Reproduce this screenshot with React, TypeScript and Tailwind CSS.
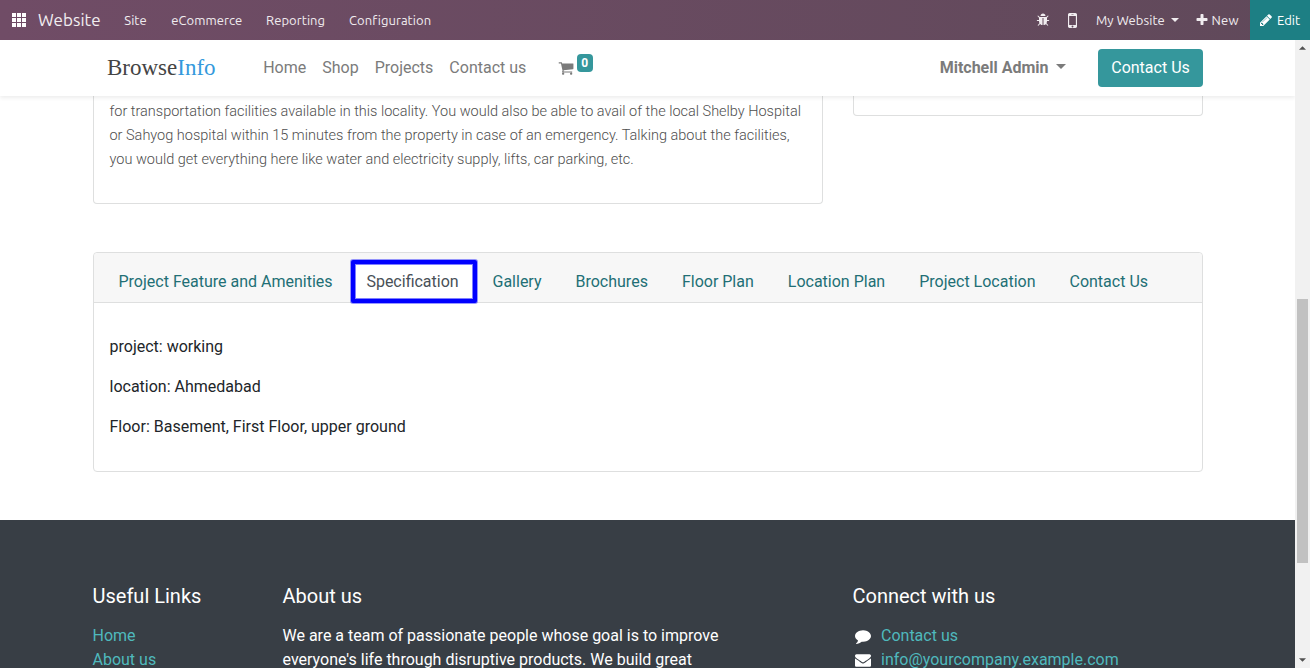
import React from "react";

const ICONS = {
  cart: "M704 1536q0 52-38 90t-90 38-90-38-38-90 38-90 90-38 90 38 38 90zm896 0q0 52-38 90t-90 38-90-38-38-90 38-90 90-38 90 38 38 90zm128-1088v512q0 24-16.5 42.5t-40.5 21.5l-1044 122q13 60 13 70 0 16-24 64h920q26 0 45 19t19 45-19 45-45 19h-1024q-26 0-45-19t-19-45q0-11 8-31.5t16-36 21.5-40 15.5-29.5l-177-823h-204q-26 0-45-19t-19-45 19-45 45-19h256q16 0 28.5 6.5t19.5 15.5 13 24.5 8 26 5.5 29.5 4.5 26h1201q26 0 45 19t19 45z",
  envelope:
    "M1792 710v794q0 66-47 113t-113 47h-1472q-66 0-113-47t-47-113v-794q44 49 101 87 362 246 497 345 57 42 92.5 65.5t94.5 48 110 24.5h2q51 0 110-24.5t94.5-48 92.5-65.5q170-123 498-345 57-39 100-87zm0-294q0 79-49 151t-122 123q-376 261-468 325-10 7-42.5 31t-54 38.5-52 32.5-57.5 27-50 9h-2q-23 0-50-9t-57.5-27-52-32.5-54-38.5-42.5-31q-91-64-262-182.5t-205-142.5q-62-42-117-115.5t-55-136.5q0-78 41.5-130t118.5-52h1472q65 0 112.5 47t47.5 113z",
  comment:
    "M1792 896q0 174-120 321.5t-326 233-450 85.5q-70 0-145-8-198 175-460 242-49 14-114 22-17 2-30.5-9t-17.5-29v-1q-3-4-.5-12t2-10 4.5-9.5l6-9 7-8.5 8-9q7-8 31-34.5t34.5-38 31-39.5 32.5-51 27-59 26-76q-157-89-247.5-220t-90.5-281q0-130 71-248.5t191-204.5 286-136.5 348-50.5q244 0 450 85.5t326 233 120 321.5z",
  pencil:
    "M491 1536l91-91-235-235-91 91v107h128v128h107zm523-928q0-22-22-22-10 0-17 7l-542 542q-7 7-7 17 0 22 22 22 10 0 17-7l542-542q7-7 7-17zm-54-192l416 416-832 832h-416v-416zm683 96q0 53-37 90l-166 166-416-416 166-165q36-38 90-38 53 0 91 38l235 234q37 39 37 91z",
  plus: "M1600 736v192q0 40-28 68t-68 28h-416v416q0 40-28 68t-68 28h-192q-40 0-68-28t-28-68v-416h-416q-40 0-68-28t-28-68v-192q0-40 28-68t68-28h416v-416q0-40 28-68t68-28h192q40 0 68 28t28 68v416h416q40 0 68 28t28 68z",
  mobile:
    "M976 1408q0-33-23.5-56.5t-56.5-23.5-56.5 23.5-23.5 56.5 23.5 56.5 56.5 23.5 56.5-23.5 23.5-56.5zm208-160v-704q0-13-9.5-22.5t-22.5-9.5h-512q-13 0-22.5 9.5t-9.5 22.5v704q0 13 9.5 22.5t22.5 9.5h512q13 0 22.5-9.5t9.5-22.5zm-192-848q0-16-16-16h-160q-16 0-16 16t16 16h160q16 0 16-16zm288-16v1024q0 52-38 90t-90 38h-512q-52 0-90-38t-38-90v-1024q0-52 38-90t90-38h512q52 0 90 38t38 90z",
  bug: "M1696 960q0 26-19 45t-45 19h-224q0 171-67 290l208 209q19 19 19 45t-19 45q-18 19-45 19t-45-19l-198-197q-5 5-15 13t-42 28.5-65 36.5-82 29-97 13v-896h-128v896q-51 0-101.5-13.5t-87-33-66-39-43.5-32.5l-15-14-183 207q-20 21-48 21-24 0-43-16-19-18-20.5-44.5t15.5-46.5l202-227q-58-114-58-274h-224q-26 0-45-19t-19-45 19-45 45-19h224v-294l-173-173q-19-19-19-45t19-45 45-19 45 19l173 173h844l173-173q19-19 45-19t45 19 19 45-19 45l-173 173v294h224q26 0 45 19t19 45zm-480-576h-640q0-133 93.5-226.5t226.5-93.5 226.5 93.5 93.5 226.5z",
};

function Icon({ name, className }: { name: keyof typeof ICONS; className: string }) {
  return (
    <svg viewBox="0 0 1792 1792" fill="currentColor" className={`block shrink-0 ${className}`}>
      <path d={ICONS[name]} />
    </svg>
  );
}

function Caret({ className }: { className: string }) {
  return (
    <svg viewBox="0 0 10 5" fill="currentColor" className={`block shrink-0 ${className}`}>
      <path d="M0 0H10L5 5Z" />
    </svg>
  );
}

function TopBar() {
  return (
    <div className="flex h-10 shrink-0 items-center bg-linear-to-r from-[#704c66] to-[#60495a] font-['Ubuntu','Noto_Sans',sans-serif] text-[13px] leading-10 whitespace-nowrap text-[#f1edf0]">
      <div className="ml-3 grid w-[14px] grid-cols-3 gap-px">
        {Array.from({ length: 9 }, (_, i) => (
          <span key={i} className="h-[4px] bg-white" />
        ))}
      </div>
      <span className="ml-3 w-[86.3px] text-[17px] tracking-[0.05px]">Website</span>
      <span className="w-[47px] tracking-[0.05px]">Site</span>
      <span className="w-[94.8px] tracking-[0.05px]">eCommerce</span>
      <span className="w-[83px] tracking-[0.05px]">Reporting</span>
      <span className="tracking-[0.05px]">Configuration</span>
      <div className="ml-auto flex h-10 items-center">
        <Icon name="bug" className="mr-[12px] size-[14px]" />
        <Icon name="mobile" className="mr-[13px] size-[21px]" />
        <span className="w-[75px] tracking-[0.06px]">My Website</span>
        <Caret className="mr-[16px] h-1 w-2" />
        <Icon name="plus" className="mr-[2px] size-[14px]" />
        <span className="w-[39px] pl-[0.5px] tracking-[0.3px]">New</span>
        <div className="flex h-10 w-[60px] items-center bg-[#1d7f84] pl-[9px] text-white">
          <Icon name="pencil" className="mr-[4px] size-[14px]" />
          <span>Edit</span>
        </div>
      </div>
    </div>
  );
}

function SiteHeader() {
  return (
    <header className="relative z-10 flex h-14 shrink-0 items-center bg-white pl-[107px] whitespace-nowrap text-[#7b7b7b] shadow-[0_2px_4px_rgba(0,0,0,0.075)]">
      <span className="w-[156.2px] font-['Liberation_Serif',serif] text-[23px] text-[#444]">
        Browse<span className="text-[#3499dc]">Info</span>
      </span>
      <nav className="flex gap-4">
        <span>Home</span>
        <span>Shop</span>
        <span>Projects</span>
        <span>Contact us</span>
      </nav>
      <div className="ml-[31.5px] flex">
        <Icon name="cart" className="size-4" />
        <span className="-mt-[6px] mb-[4px] ml-[3px] flex h-[18px] w-4 items-center justify-center rounded bg-[#35979c] text-xs font-bold text-white">
          0
        </span>
      </div>
      <span className="ml-auto font-bold">Mitchell Admin</span>
      <Caret className="mr-8 mb-[3px] ml-[7.5px] h-[5px] w-[10px]" />
      <span className="mr-[92px] flex h-[38px] w-[105px] items-center justify-center rounded bg-[#35979c] text-white">
        Contact Us
      </span>
    </header>
  );
}

function Tabs() {
  const rest = ["Gallery", "Brochures", "Floor Plan", "Location Plan", "Project Location", "Contact Us"];
  return (
    <div className="flex h-[50px] items-end rounded-t border-b border-[#dedfdf] bg-[#f7f7f7] pl-2 whitespace-nowrap text-[#226f75]">
      <span className="h-[41px] w-[249px] pl-[16.5px] leading-[41px]">Project Feature and Amenities</span>
      <span className="z-10 -mb-px flex h-[43px] w-[126px] items-center rounded-[2px] border-4 border-[#0000ff] bg-white pl-[11.4px] text-[#495057] shadow-[0_0_0_1px_rgba(0,0,255,0.4),inset_0_0_0_1px_rgba(0,0,255,0.5)]">
        Specification
      </span>
      <div className="flex gap-[34px] pl-[15.5px]">
        {rest.map((label) => (
          <span key={label} className="h-[41px] leading-[41px]">
            {label}
          </span>
        ))}
      </div>
    </div>
  );
}

function Footer() {
  return (
    <footer className="mt-12 flex h-[148px] bg-[#383e45] pt-16 pl-[92.5px] text-white">
      <div className="w-[190px]">
        <h5 className="mb-4 text-xl leading-6">Useful Links</h5>
        <div className="text-[#4fb9bd]">
          <p>Home</p>
          <p>About us</p>
        </div>
      </div>
      <div className="w-[570px]">
        <h5 className="mb-4 text-xl leading-6">About us</h5>
        <p>We are a team of passionate people whose goal is to improve</p>
        <p>everyone's life through disruptive products. We build great</p>
      </div>
      <div>
        <h5 className="mb-4 text-xl leading-6">Connect with us</h5>
        <p className="flex items-center">
          <Icon name="comment" className="mr-[10.5px] ml-[2px] size-4" />
          <span className="text-[#4fb9bd]">Contact us</span>
        </p>
        <p className="flex items-center">
          <Icon name="envelope" className="mr-[10.5px] ml-[2px] size-4" />
          <span className="text-[#4fb9bd]">info@yourcompany.example.com</span>
        </p>
      </div>
    </footer>
  );
}

function Scrollbar() {
  return (
    <div className="flex w-[15px] shrink-0 flex-col items-center bg-[#f1f1f1] text-[#505050]">
      <Caret className="mt-[6px] h-1 w-[7px] rotate-180" />
      <div className="mt-[249px] h-[264px] w-[11px] bg-[#c1c1c1]" />
      <Caret className="mt-auto mb-[6px] h-1 w-[7px]" />
    </div>
  );
}

export default function App() {
  return (
    <div className="flex h-[668px] w-[1310px] flex-col overflow-hidden bg-white font-['Roboto',sans-serif] text-base leading-6 text-[#212529]">
      <TopBar />
      <div className="flex min-h-0 flex-1">
        <div className="flex min-w-0 flex-1 flex-col overflow-hidden">
          <SiteHeader />
          <main className="shrink-0 px-[93px]">
            <div className="flex h-[108px] w-[1110px] items-start justify-between">
              <div className="h-[108px] w-[730px] rounded-b border border-t-0 border-[#dedfdf] pt-1 pl-[15.5px] text-[14.49px] font-light whitespace-nowrap text-[#4e4e4e]">
                <p>for transportation facilities available in this locality. You would also be able to avail of the local Shelby Hospital</p>
                <p>or Sahyog hospital within 15 minutes from the property in case of an emergency. Talking about the facilities,</p>
                <p>you would get everything here like water and electricity supply, lifts, car parking, etc.</p>
              </div>
              <div className="h-5 w-[350px] rounded-b border border-t-0 border-[#dedfdf]" />
            </div>
            <section className="mt-12 h-[220px] w-[1110px] rounded border border-[#dedfdf]">
              <Tabs />
              <div className="flex flex-col gap-4 pt-8 pl-[15.5px]">
                <p>project: working</p>
                <p>location: Ahmedabad</p>
                <p>Floor: Basement, First Floor, upper ground</p>
              </div>
            </section>
          </main>
          <Footer />
        </div>
        <Scrollbar />
      </div>
    </div>
  );
}
